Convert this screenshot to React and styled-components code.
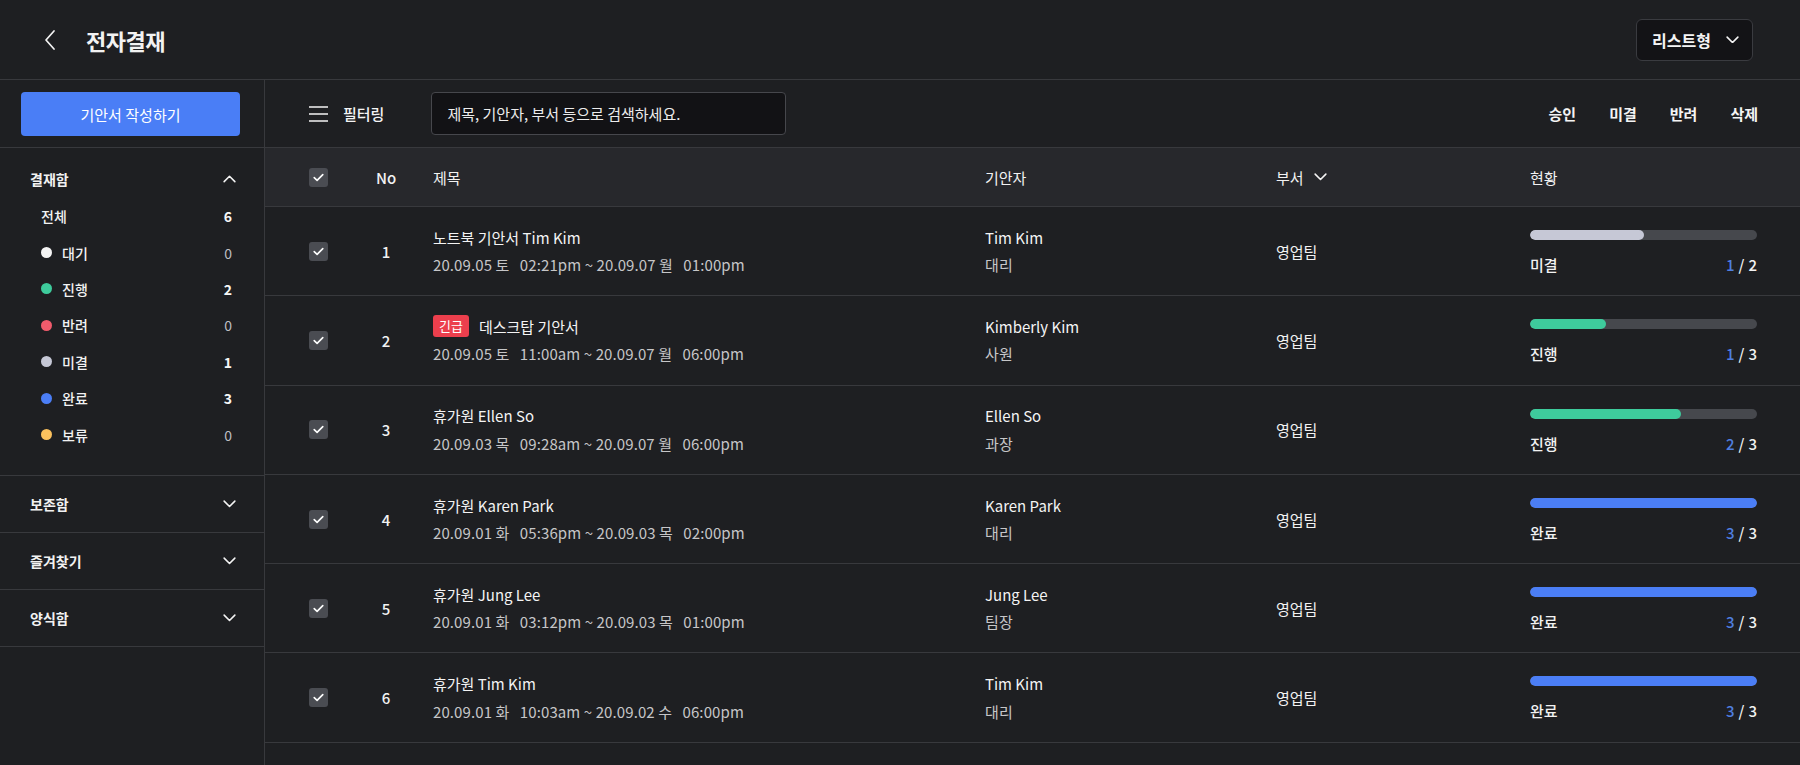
import React from 'react';
import styled, { createGlobalStyle } from 'styled-components';

const GlobalStyle = createGlobalStyle`
  html, body {
    margin: 0;
    padding: 0;
    background: #1e1f22;
  }
  body {
    font-family: "Noto Sans CJK KR", "Noto Sans", sans-serif;
    color: #f2f2f2;
  }
  * { box-sizing: border-box; }
`;

const colors = {
  대기: '#f4f4f4',
  진행: '#3ecb9c',
  반려: '#f15b6c',
  미결: '#c6c8d6',
  완료: '#4b7ef6',
  보류: '#fbc15e',
};

const rows = [
  { no: 1, title: '노트북 기안서 Tim Kim', start: ['20.09.05 토', '02:21pm'], end: ['20.09.07 월', '01:00pm'], name: 'Tim Kim', rank: '대리', status: '미결', done: 1, total: 2 },
  { no: 2, urgent: true, title: '데스크탑 기안서', start: ['20.09.05 토', '11:00am'], end: ['20.09.07 월', '06:00pm'], name: 'Kimberly Kim', rank: '사원', status: '진행', done: 1, total: 3 },
  { no: 3, title: '휴가원 Ellen So', start: ['20.09.03 목', '09:28am'], end: ['20.09.07 월', '06:00pm'], name: 'Ellen So', rank: '과장', status: '진행', done: 2, total: 3 },
  { no: 4, title: '휴가원 Karen Park', start: ['20.09.01 화', '05:36pm'], end: ['20.09.03 목', '02:00pm'], name: 'Karen Park', rank: '대리', status: '완료', done: 3, total: 3 },
  { no: 5, title: '휴가원 Jung Lee', start: ['20.09.01 화', '03:12pm'], end: ['20.09.03 목', '01:00pm'], name: 'Jung Lee', rank: '팀장', status: '완료', done: 3, total: 3 },
  { no: 6, title: '휴가원 Tim Kim', start: ['20.09.01 화', '10:03am'], end: ['20.09.02 수', '06:00pm'], name: 'Tim Kim', rank: '대리', status: '완료', done: 3, total: 3 },
];

const counts = [
  { label: '대기', n: 0 },
  { label: '진행', n: 2 },
  { label: '반려', n: 0 },
  { label: '미결', n: 1 },
  { label: '완료', n: 3 },
  { label: '보류', n: 0 },
];

const Page = styled.div`
  height: 100vh;
  display: flex;
  flex-direction: column;
  overflow: hidden;
`;

const Header = styled.header`
  height: 80px;
  flex: none;
  display: flex;
  align-items: center;
  padding: 0 47px 0 44px;
  border-bottom: 1px solid #38393d;
`;

const BackBtn = styled.button`
  background: none;
  border: 0;
  padding: 0;
  width: 12px;
  height: 22px;
  display: flex;
  margin-right: 30px;
  cursor: pointer;
`;

const Title = styled.h1`
  margin: 0;
  font-size: 22px;
  font-weight: 700;
  letter-spacing: -0.5px;
  flex: 1;
`;

const ViewSelect = styled.button`
  height: 42px;
  width: 117px;
  display: flex;
  align-items: center;
  justify-content: space-between;
  padding: 0 13px 0 15px;
  background: #131316;
  border: 1px solid #3a3b40;
  border-radius: 6px;
  color: #f4f4f4;
  font-family: inherit;
  font-size: 16px;
  font-weight: 700;
`;

const Body = styled.div`
  flex: 1;
  display: flex;
  min-height: 0;
`;

const Sidebar = styled.aside`
  width: 265px;
  flex: none;
  border-right: 1px solid #38393d;
  display: flex;
  flex-direction: column;
`;

const WriteArea = styled.div`
  height: 68px;
  padding: 12px 24px 0 21px;
  border-bottom: 1px solid #38393d;
`;

const WriteButton = styled.button`
  width: 219px;
  height: 44px;
  border: 0;
  border-radius: 4px;
  background: #4a7ef6;
  color: #fff;
  font-family: inherit;
  font-size: 15px;
  font-weight: 400;
`;

const Section = styled.section`
  border-bottom: 1px solid #38393d;
  padding-bottom: ${p => (p.open ? '22px' : '0')};
`;

const SectionHead = styled.div`
  display: flex;
  align-items: center;
  justify-content: space-between;
  padding: ${p => (p.open ? '20px 28px 8px 30px' : '0 28px 0 30px')};
  height: ${p => (p.open ? 'auto' : '56px')};
  font-size: 14px;
  font-weight: 700;
  line-height: 22px;
`;

const CountRow = styled.div`
  height: 36.4px;
  display: flex;
  align-items: center;
  padding: 0 32px 0 41px;
  font-size: 14px;
  font-weight: 500;
`;

const Dot = styled.span`
  width: 11px;
  height: 11px;
  border-radius: 50%;
  background: ${p => p.color};
  margin-right: 10px;
`;

const CountLabel = styled.span`
  flex: 1;
`;

const CountNum = styled.span`
  font-weight: ${p => (p.zero ? 400 : 700)};
  color: ${p => (p.zero ? '#bdbec2' : '#f6f6f6')};
`;

const Main = styled.main`
  flex: 1;
  display: flex;
  flex-direction: column;
  min-width: 0;
`;

const Toolbar = styled.div`
  height: 68px;
  flex: none;
  display: flex;
  align-items: center;
  padding: 0 42px 0 44px;
  border-bottom: 1px solid #38393d;
`;

const FilterBtn = styled.button`
  display: flex;
  align-items: center;
  gap: 15px;
  background: none;
  border: 0;
  padding: 0;
  color: #f4f4f4;
  font-family: inherit;
  font-size: 15px;
  font-weight: 500;
  margin-right: 47px;
`;

const Search = styled.input`
  width: 355px;
  height: 43px;
  background: #121215;
  border: 1px solid #46474c;
  border-radius: 4px;
  padding: 0 15px;
  color: #f4f4f4;
  font-family: inherit;
  font-size: 15px;
  outline: none;
  &::placeholder { color: #ececec; }
`;

const Actions = styled.div`
  margin-left: auto;
  display: flex;
  gap: 33px;
`;

const Action = styled.button`
  background: none;
  border: 0;
  padding: 0;
  color: #f4f4f4;
  font-family: inherit;
  font-size: 15px;
  font-weight: 700;
`;

const GridRow = styled.div`
  display: grid;
  grid-template-columns: 57px 40px 579px 291px 254px 1fr;
  align-items: center;
  padding: 0 43px 0 44px;
  border-bottom: 1px solid #38393d;
  height: ${p => (p.head ? '59px' : '89.3px')};
  background: ${p => (p.head ? '#27282c' : 'transparent')};
  font-size: 15px;
  font-weight: 400;
`;

const Check = styled.span`
  width: 19px;
  height: 19px;
  border-radius: 3px;
  background: #4a4c52;
  display: flex;
  align-items: center;
  justify-content: center;
`;

const NoCell = styled.div`
  text-align: center;
  font-weight: 500;
`;

const TitleCell = styled.div`
  padding-left: 27px;
  display: flex;
  flex-direction: column;
  gap: 6px;
`;

const Stack = styled.div`
  display: flex;
  flex-direction: column;
  gap: 6px;
`;

const Main1 = styled.div`
  display: flex;
  align-items: center;
  height: 22px;
  font-size: 15px;
  color: #f4f4f4;
`;

const Sub = styled.div`
  height: 22px;
  line-height: 22px;
  font-size: 15px;
  font-weight: 400;
  color: #c6c6c8;
  white-space: pre;
  letter-spacing: 0.1px;
`;

const Badge = styled.span`
  height: 22px;
  padding: 0 6px;
  border-radius: 3px;
  background: #ec3f4d;
  color: #fff;
  font-size: 13px;
  line-height: 22px;
  margin-right: 10px;
`;

const HeadSort = styled.div`
  display: flex;
  align-items: center;
  gap: 10px;
`;

const StatusCell = styled.div`
  align-self: start;
  padding-top: 23px;
  display: flex;
  flex-direction: column;
  gap: 14px;
`;

const Track = styled.div`
  height: 10px;
  border-radius: 5px;
  background: #46484d;
  overflow: hidden;
`;

const Fill = styled.div`
  height: 100%;
  border-radius: 5px;
  background: ${p => p.color};
`;

const StatusLine = styled.div`
  display: flex;
  justify-content: space-between;
  line-height: 22px;
  font-weight: 500;
`;

const Ratio = styled.span`
  font-weight: 500;
  & b {
    color: #4f7fe0;
    font-weight: 500;
  }
  & i {
    font-style: normal;
    margin: 0 4px;
  }
`;

const Chevron = ({ dir = 'down', size = 13 }) => (
  <svg width={size} height={size * 0.6} viewBox="0 0 13 8" fill="none">
    <path
      d={dir === 'down' ? 'M1 1.2l5.5 5.5L12 1.2' : 'M1 6.8l5.5-5.5L12 6.8'}
      stroke="#f4f4f4"
      strokeWidth="1.6"
      strokeLinecap="round"
      strokeLinejoin="round"
    />
  </svg>
);

const CheckBox = () => (
  <Check>
    <svg width="11" height="9" viewBox="0 0 11 9" fill="none">
      <path d="M1.2 4.6l2.9 2.8L9.8 1.6" stroke="#fff" strokeWidth="1.6" strokeLinecap="round" strokeLinejoin="round" />
    </svg>
  </Check>
);

function SideSection({ title, open, children }) {
  return (
    <Section open={open}>
      <SectionHead open={open}>
        <span>{title}</span>
        <Chevron dir={open ? 'up' : 'down'} />
      </SectionHead>
      {children}
    </Section>
  );
}

export default function App() {
  return (
    <Page>
      <GlobalStyle />
      <Header>
        <BackBtn>
          <svg width="12" height="22" viewBox="0 0 12 22" fill="none">
            <path d="M10 2L2 11l8 9" stroke="#f4f4f4" strokeWidth="1.7" strokeLinecap="round" strokeLinejoin="round" />
          </svg>
        </BackBtn>
        <Title>전자결재</Title>
        <ViewSelect>
          리스트형
          <Chevron />
        </ViewSelect>
      </Header>
      <Body>
        <Sidebar>
          <WriteArea>
            <WriteButton>기안서 작성하기</WriteButton>
          </WriteArea>
          <SideSection title="결재함" open>
            <CountRow>
              <CountLabel>전체</CountLabel>
              <CountNum>6</CountNum>
            </CountRow>
            {counts.map(c => (
              <CountRow key={c.label}>
                <Dot color={colors[c.label]} />
                <CountLabel>{c.label}</CountLabel>
                <CountNum zero={c.n === 0}>{c.n}</CountNum>
              </CountRow>
            ))}
          </SideSection>
          <SideSection title="보존함" />
          <SideSection title="즐겨찾기" />
          <SideSection title="양식함" />
        </Sidebar>
        <Main>
          <Toolbar>
            <FilterBtn>
              <svg width="19" height="16" viewBox="0 0 19 16" fill="none">
                <path d="M0 1h19M0 8h19M0 15h19" stroke="#f4f4f4" strokeWidth="1.6" />
              </svg>
              필터링
            </FilterBtn>
            <Search placeholder="제목, 기안자, 부서 등으로 검색하세요." />
            <Actions>
              <Action>승인</Action>
              <Action>미결</Action>
              <Action>반려</Action>
              <Action>삭제</Action>
            </Actions>
          </Toolbar>
          <GridRow head>
            <CheckBox />
            <NoCell>No</NoCell>
            <TitleCell>제목</TitleCell>
            <div>기안자</div>
            <HeadSort>
              부서
              <Chevron />
            </HeadSort>
            <div>현황</div>
          </GridRow>
          {rows.map(r => (
            <GridRow key={r.no}>
              <CheckBox />
              <NoCell>{r.no}</NoCell>
              <TitleCell>
                <Main1>
                  {r.urgent && <Badge>긴급</Badge>}
                  {r.title}
                </Main1>
                <Sub>{`${r.start[0]}   ${r.start[1]} ~ ${r.end[0]}   ${r.end[1]}`}</Sub>
              </TitleCell>
              <Stack>
                <Main1>{r.name}</Main1>
                <Sub>{r.rank}</Sub>
              </Stack>
              <div>영업팀</div>
              <StatusCell>
                <Track>
                  <Fill color={colors[r.status]} style={{ width: `${(r.done / r.total) * 100}%` }} />
                </Track>
                <StatusLine>
                  <span>{r.status}</span>
                  <Ratio>
                    <b>{r.done}</b>
                    <i>/</i>
                    {r.total}
                  </Ratio>
                </StatusLine>
              </StatusCell>
            </GridRow>
          ))}
        </Main>
      </Body>
    </Page>
  );
}
